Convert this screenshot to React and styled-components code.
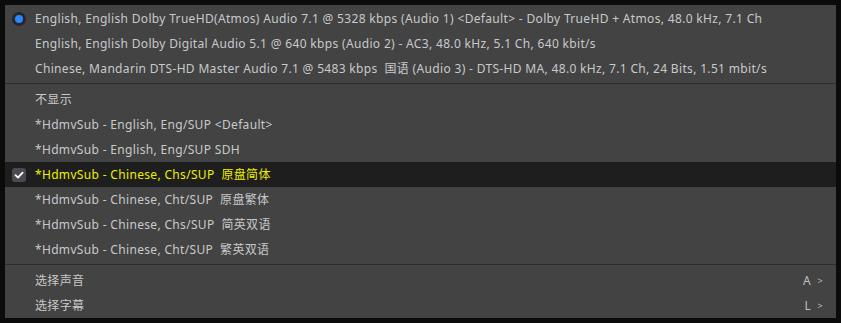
import styled, { createGlobalStyle } from 'styled-components';

const GlobalStyle = createGlobalStyle`
  html, body {
    margin: 0;
    padding: 0;
    background: #0b0b0b;
  }
`;

const Page = styled.div`
  width: 841px;
  height: 323px;
  padding: 5px;
  box-sizing: border-box;
`;

const Menu = styled.div`
  width: 831px;
  height: 313px;
  box-sizing: border-box;
  padding-top: 1px;
  background: #434343;
  display: flex;
  flex-direction: column;
  font-family: "Noto Sans", "Noto Sans CJK SC", sans-serif;
  font-size: 12px;
  letter-spacing: 0.33px;
`;

const Row = styled.div`
  height: 25px;
  flex: 0 0 25px;
  display: flex;
  align-items: center;
  position: relative;
  padding: 0 13px 0 30px;
  background: ${(p) => (p.active ? '#1e1e1e' : 'transparent')};
  color: ${(p) => (p.active ? '#f0ee00' : '#c8c9cb')};
  white-space: pre;
`;

const Label = styled.span`
  flex: 1;
  margin-top: -1px;
`;

const Mark = styled.span`
  position: absolute;
  left: 7px;
  top: 50%;
  transform: translateY(-50%);
  width: 14px;
  height: 14px;
  display: flex;
  align-items: center;
  justify-content: center;
`;

const Radio = styled(Mark)`
  border-radius: 50%;
  background: #262626;
  &::after {
    content: '';
    width: 8px;
    height: 8px;
    border-radius: 50%;
    background: #2d86ff;
  }
`;

const Check = styled(Mark)`
  border-radius: 3px;
  background: #4a4a52;
`;

const Separator = styled.div`
  height: 1px;
  flex: 0 0 1px;
  margin: 2px 0 3px;
  background: #2c2c2c;
`;

const Shortcut = styled.span`
  color: #b8c0c8;
  display: flex;
  align-items: center;
  gap: 3px;
  small {
    font-size: 9px;
  }
`;

const audio = [
  'English, English Dolby TrueHD(Atmos) Audio 7.1 @ 5328 kbps (Audio 1) <Default> - Dolby TrueHD + Atmos, 48.0 kHz, 7.1 Ch',
  'English, English Dolby Digital Audio 5.1 @ 640 kbps (Audio 2) - AC3, 48.0 kHz, 5.1 Ch, 640 kbit/s',
  'Chinese, Mandarin DTS-HD Master Audio 7.1 @ 5483 kbps  国语 (Audio 3) - DTS-HD MA, 48.0 kHz, 7.1 Ch, 24 Bits, 1.51 mbit/s',
];

const subs = [
  '不显示',
  '*HdmvSub - English, Eng/SUP <Default>',
  '*HdmvSub - English, Eng/SUP SDH',
  '*HdmvSub - Chinese, Chs/SUP  原盘简体',
  '*HdmvSub - Chinese, Cht/SUP  原盘繁体',
  '*HdmvSub - Chinese, Chs/SUP  简英双语',
  '*HdmvSub - Chinese, Cht/SUP  繁英双语',
];

export default function App() {
  return (
    <>
      <GlobalStyle />
      <Page>
        <Menu>
          {audio.map((t, i) => (
            <Row key={t}>
              {i === 0 && <Radio />}
              <Label>{t}</Label>
            </Row>
          ))}
          <Separator />
          {subs.map((t, i) => (
            <Row key={t} active={i === 3}>
              {i === 3 && (
                <Check>
                  <svg width="10" height="10" viewBox="0 0 10 10">
                    <path d="M1.5 5.2 L4 7.6 L8.6 2.6" fill="none" stroke="#fff" strokeWidth="1.8" strokeLinecap="round" strokeLinejoin="round" />
                  </svg>
                </Check>
              )}
              <Label>{t}</Label>
            </Row>
          ))}
          <Separator />
          <Row>
            <Label>选择声音</Label>
            <Shortcut>A <small>&gt;</small></Shortcut>
          </Row>
          <Row>
            <Label>选择字幕</Label>
            <Shortcut>L <small>&gt;</small></Shortcut>
          </Row>
        </Menu>
      </Page>
    </>
  );
}
